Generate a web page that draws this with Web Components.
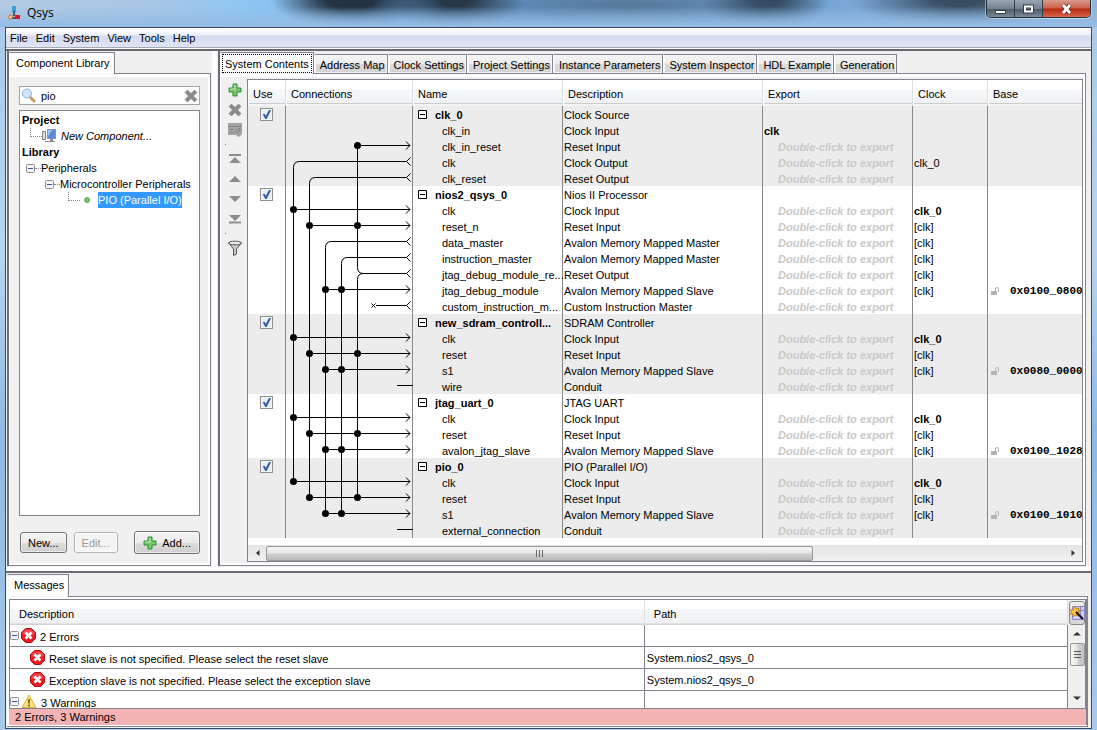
<!DOCTYPE html>
<html lang="en">
<head>
<meta charset="utf-8">
<title>Qsys</title>
<style>
html, body { margin: 0; }
body { font: 11px/16px "Liberation Sans", Arial, sans-serif; color: #000; background: #a9c9ea; }
</style>
</head>
<body>
<qsys-window></qsys-window>
<script>
class Base extends HTMLElement {
  connectedCallback() {
    if (this.shadowRoot) return;
    const t = document.createElement('template');
    t.innerHTML = `<style>*{box-sizing:border-box}button{font:inherit;color:inherit;margin:0}</style>` + this.view();
    this.attachShadow({ mode: 'open' }).append(t.content.cloneNode(true));
  }
}
const define = (n, c) => customElements.define(n, c);

const plus = `<svg width="14" height="14" viewBox="0 0 14 14"><path d="M5 1h4v4h4v4H9v4H5V9H1V5h4z" fill="#7cc66e" stroke="#2f8a35"/><path d="M6 2.5h1V6H2.5" fill="none" stroke="#c3eab8"/></svg>`;
const cross = `<svg width="14" height="14" viewBox="0 0 14 14"><path d="M3.5 1 7 4.5 10.500 1 13 3.500 9.500 7 13 10.500 10.500 13 7 9.500 3.500 13 1 10.500 4.500 7 1 3.500z" fill="#8b8b8b" stroke="#777" stroke-width=".6"/></svg>`;
const errorIcon = `<svg width="15" height="15" viewBox="0 0 15 15"><path d="M4.500.5h6l4 4v6l-4 4h-6l-4-4v-6z" fill="#e81c22" stroke="#b80e14"/><path d="M4.500 1.500h6l3 3v2c-3 1-9 1-12 0v-2z" fill="#fa6468" opacity=".6"/><path d="m4.500 4.500 6 6m0-6-6 6" stroke="#fff" stroke-width="2.600"/></svg>`;
const warnIcon = `<svg width="16" height="15" viewBox="0 0 16 15"><path d="M8 1 15 13.500H1z" fill="#fbe17c" stroke="#d9b23c" stroke-linejoin="round"/><path d="M8 5v4.500M8 10.500v2" stroke="#7a6410" stroke-width="1.800"/></svg>`;
const minus = `<svg width="9" height="9" viewBox="0 0 9 9"><rect x=".5" y=".5" width="8" height="8" rx="1" fill="#f4f4f4" stroke="#8e8f8f"/><path d="M2 4.500h5" stroke="#3b56a0"/></svg>`;

define('title-bar', class extends Base {
  view() { return `<style>
    :host{display:flex;height:27px;align-items:stretch;margin:0 -5px;padding:0 5px 0 8px;overflow:hidden;
      background:
       linear-gradient(180deg,transparent 25%,#94bce4 95%),
       radial-gradient(ellipse 80px 30px at 350px 0,#16202cdd 30%,transparent),
       radial-gradient(ellipse 70px 30px at 455px 0,#1d2833dd 20%,transparent),
       radial-gradient(ellipse 190px 24px at 630px 6px,#4f6a84bb,transparent),
       radial-gradient(ellipse 65px 30px at 765px 0,#25374add 20%,transparent),
       radial-gradient(ellipse 110px 30px at 960px 0,#2c3e50dd 20%,transparent),
       linear-gradient(90deg,#b4cbe2,#a5c6e6 15%,#8fc6f3 22%,#86bff0 28%,#5f93c6 40%,#6f9fd0 70%,#83b0dd 85%,#8fb6da)}
    h1{font:12px/26px "Open Sans","Noto Sans",sans-serif;margin:0 auto 0 6px}
    .logo{margin-top:6px}
    .box{display:flex;height:18px;border:1px solid #26303c;border-top:0;border-radius:0 0 5px 5px;overflow:hidden;box-shadow:0 0 0 1px #ffffff66;margin-right:1px}
    button{display:grid;place-items:center;padding:0;border:0;border-right:1px solid #333e4c;width:28px;background:linear-gradient(#9aa6b3,#76828f 50%,#4c5967 52%,#7d8b99)}
    .close{width:47px;border:0;background:linear-gradient(#d99a8d,#cc5e47 48%,#b62a10 52%,#d8674a)}
  </style>
  <svg class="logo" width="13" height="14" viewBox="0 0 13 14"><path d="M4 0h4v6H4z" fill="#3aa0dc"/><path d="M6 5v5M3 12h6" stroke="#20364c" stroke-width="1.400"/><circle cx="2.500" cy="11" r="2" fill="#f6d0a0" stroke="#e26418"/><path d="M7 9h5v4H7z" fill="#e0122c"/></svg>
  <h1>Qsys</h1>
  <div class="box">
   <button aria-label="Minimize"><svg width="13" height="12"><path d="M1.500 7.500h10v3h-10z" fill="#fff" stroke="#333d49"/></svg></button>
   <button aria-label="Maximize"><svg width="13" height="12"><path d="M3 3.500h7v5H3z" fill="none" stroke="#333d49" stroke-width="4"/><path d="M3 3.500h7v5H3z" fill="none" stroke="#fff" stroke-width="2"/></svg></button>
   <button class="close" aria-label="Close"><svg width="13" height="12"><path d="m3 2 7 8m0-8-7 8" stroke="#5c2a28" stroke-width="4.500"/><path d="m3 2 7 8m0-8-7 8" stroke="#fff" stroke-width="2.800"/></svg></button>
  </div>`; }
});

define('menu-bar', class extends Base {
  view() { return `<style>
    :host{display:block;border-bottom:2px solid #68686e;background:#fff;padding-bottom:1px}
    nav{display:flex;gap:8px;padding:0 4px;height:20px;border-bottom:1px solid #a9a9b4;background:linear-gradient(#fff,#eef1f8 35%,#d5dbee 42%,#e0e5f5)}
    button{border:0;background:none;padding:1px 0 0;line-height:16px}
  </style><nav>${['File','Edit','System','View','Tools','Help'].map(t => `<button>${t}</button>`).join('')}</nav>`; }
});

define('tab-panel', class extends Base {
  view() {
    const tabs = this.getAttribute('tabs').split('|');
    return `<style>
    :host{display:flex;flex-direction:column;min-width:0;background:#f0f0f0;padding-top:1px}
    .tabs{display:flex;position:relative}
    button{white-space:nowrap;border:1px solid #83838f;border-left-color:#fff;border-bottom:0;height:19px;margin-top:2px;padding:1px 2px 0 5px;background:linear-gradient(#f4f4f4,#ececec 50%,#dcdcdc 52%,#d2d2d2);box-shadow:inset 0 0 0 1px #f6f6f6}
    button:first-child{height:22px;margin:0 0 -1px;background:#fff;border-left-color:#fff;padding:0 4px 2px 6px;position:relative}
    :host([focused]) button:first-child{padding:0 1px}
    :host([focused]) button:first-child span{display:block;border:1px dotted #000;padding:0 2px;height:19px;line-height:18px}
    .body{flex:1;display:flex;flex-direction:column;border:1px solid #83838f;border-left:0;background:#fff;padding:3px 2px 2px 1px;min-width:0}
    .in{flex:1;display:flex;flex-direction:column;background:#f0f0f0;min-width:0}
    :host([flush]) .in{background:#fff}
    :host([flush]) button:first-child{height:23px}
    :host([flush]) .body{padding:2px 0 1px 2px}
    </style><div class="tabs" role="tablist">${tabs.map((t,i) => `<button role="tab" aria-selected="${!i}"><span>${t}</span></button>`).join('')}</div>
    <div class="body"><div class="in"><slot></slot></div></div>`; }
});

define('component-library', class extends Base {
  view() { return `<style>
    :host{flex:1;display:flex;flex-direction:column;padding:9px 8px 9px 9px}
    .search{display:flex;align-items:center;border:1px solid #a4a4a4;background:#fff;height:19px;padding:0 1px;margin-bottom:5px}
    input{flex:1;min-width:0;border:0;outline:0;font:inherit;padding:1px 0 0 5px;background:none}
    .search button{display:flex;border:0;background:none;padding:0}
    .tree{flex:1;border:1px solid #83838f;background:#fff;padding:1px 2px}
    .tree div{display:flex;align-items:center;height:16px;white-space:nowrap}
    b{font-size:11px}
    .a{padding-left:8px}.c{padding-left:4px}.d{padding-left:23px}.e{padding-left:46px}
    .dots{width:6px;border-top:1px dotted #888}
    .elbow{width:12px;height:9px;border:dotted #888;border-width:0 0 1px 1px;align-self:start}
    .sel{background:#39f;color:#fff;padding:0;margin-left:8px}
    .dot{width:6px;height:6px;border-radius:3px;background:#7ccb6e;border:1px solid #59a650;margin-left:4px}
    i{margin-left:5px}
    .row{display:flex;align-items:center;margin-top:15px;gap:7px;padding-left:1px}
    .row button{height:21px;padding:0 7px;border:1px solid #707070;border-radius:3px;background:linear-gradient(#f4f4f4,#ebebeb 50%,#dcdcdc 52%,#cfcfcf);box-shadow:inset 0 0 0 1px #fff9;white-space:nowrap}
    .row button:disabled{color:#999;border-color:#b5b5b5;background:#f4f4f4}
    .row .add{height:23px;margin-left:auto;display:flex;align-items:center;gap:5px;padding:0 8px}
  </style>
  <div class="search"><svg width="15" height="15" viewBox="0 0 15 15"><path d="m9 9 4 4" stroke="#c99a68" stroke-width="3" stroke-linecap="round"/><circle cx="6" cy="5.500" r="4.500" fill="#cfe6fb" stroke="#8fb3da"/></svg>
   <input type="text" aria-label="Search components" value="pio"><button aria-label="Clear search">${cross}</button></div>
  <div class="tree">
   <div><b>Project</b></div>
   <div class="a"><span class="elbow"></span><svg width="14" height="14" viewBox="0 0 14 14"><rect x=".5" y="2.500" width="3" height="8" fill="#ddd" stroke="#888"/><rect x="5.500" y=".5" width="8" height="9" fill="#5c8bdc" stroke="#8095c0"/><path d="M6 1h4l-4 6z" fill="#a9c5f3"/><path d="M8 10h3v2h2v1H3v-1h5z" fill="#888"/></svg><i>New Component...</i></div>
   <div><b>Library</b></div>
   <div class="c">${minus}<span class="dots"></span><span>Peripherals</span></div>
   <div class="d">${minus}<span class="dots"></span><span>Microcontroller Peripherals</span></div>
   <div class="e"><span class="elbow"></span><span class="dot"></span><span class="sel">PIO (Parallel I/O)</span></div>
  </div>
  <div class="row"><button>New...</button><button disabled>Edit...</button><button class="add">${plus}Add...</button></div>`; }
});

/* module: [name, description, [[port, description, export, clock, base], ...]] */
const X = '*';
const modules = [
  ['clk_0','Clock Source',[['clk_in','Clock Input','clk'],['clk_in_reset','Reset Input',X],['clk','Clock Output',X,'clk_0'],['clk_reset','Reset Output',X]]],
  ['nios2_qsys_0','Nios II Processor',[['clk','Clock Input',X,'!clk_0'],['reset_n','Reset Input',X,'[clk]'],['data_master','Avalon Memory Mapped Master',X,'[clk]'],['instruction_master','Avalon Memory Mapped Master',X,'[clk]'],['jtag_debug_module_re...','Reset Output',X,'[clk]'],['jtag_debug_module','Avalon Memory Mapped Slave',X,'[clk]','0x0100_0800'],['custom_instruction_m...','Custom Instruction Master',X]]],
  ['new_sdram_controll...','SDRAM Controller',[['clk','Clock Input',X,'!clk_0'],['reset','Reset Input',X,'[clk]'],['s1','Avalon Memory Mapped Slave',X,'[clk]','0x0080_0000'],['wire','Conduit',X]]],
  ['jtag_uart_0','JTAG UART',[['clk','Clock Input',X,'!clk_0'],['reset','Reset Input',X,'[clk]'],['avalon_jtag_slave','Avalon Memory Mapped Slave',X,'[clk]','0x0100_1028']]],
  ['pio_0','PIO (Parallel I/O)',[['clk','Clock Input',X,'!clk_0'],['reset','Reset Input',X,'[clk]'],['s1','Avalon Memory Mapped Slave',X,'[clk]','0x0100_1010'],['external_connection','Conduit',X]]]
];

define('connection-graph', class extends Base {
  view() {
    const y = r => r * 16 + 7.5, x = c => c * 16 + 7.5;
    let p = '', dots = '';
    const dot = (c, r) => dots += `<circle cx="${x(c)}" cy="${y(r)}" r="3.500"/>`;
    const sink = (r, cols) => { p += `M${x(cols[0])} ${y(r)}H124m-4-4 4 4-4 4`; cols.forEach(c => dot(c, r)); };
    const source = (r, c, end) => p += `M${x(c)} ${y(end)}V${y(r) + 6}q0-6 6-6H120.500m4-4-4 4 4 4`;
    sink(2, [4]);
    source(3, 0, 23); source(4, 1, 24); source(8, 2, 25); source(9, 3, 25); source(10, 4, 24);
    p += `M${x(4)} ${y(2)}V${y(10) - 6}q0 6 6 6`;
    [6, 14, 19, 23].forEach(r => sink(r, [0]));
    [7, 15, 20, 24].forEach(r => sink(r, [1, 4]));
    [11, 16, 21, 25].forEach(r => sink(r, [2, 3]));
    p += `M90 ${y(12)}H120.500m4-4-4 4 4 4M85.500 ${y(12) - 2}l4 4m0-4-4 4`;
    [17, 26].forEach(r => p += `M111 ${y(r)}h16`);
    return `<style>:host{display:block}svg{display:block}</style><svg width="127" height="432" viewBox="0 0 127 432"><path d="${p}" fill="none" stroke="#000"/>${dots}</svg>`; }
});

define('system-contents', class extends Base {
  view() {
    const lock = `<svg width="9" height="9" viewBox="0 0 9 9"><path d="M0 4h6v4H0z" fill="#b4b4b4"/><path d="M4.500 4V2q0-1.500 1.500-1.500T7.500 2v3" fill="none" stroke="#b4b4b4"/></svg>`;
    const btn = (n, s) => `<button aria-label="${n}">${s}</button>`;
    const tri = (d) => `<svg width="14" height="14" viewBox="0 0 14 14"><path d="${d}" fill="#8d8d8d"/></svg>`;
    const cell = m => m[2].map(p => `<tr><td></td><td></td><td class="port">${p[0]}</td><td>${p[1]}</td>
      <td>${p[2] === X ? '<em>Double-click to export</em>' : `<b>${p[2]}</b>`}</td>
      <td>${!p[3] ? '' : p[3][0] === '!' ? `<b>${p[3].slice(1)}</b>` : p[3]}</td>
      <td>${p[4] ? `<div class="base">${lock}<code>${p[4]}</code></div>` : ''}</td></tr>`).join('');
    return `<style>
    :host{flex:1;display:flex;padding:2px 0 1px 1px;min-width:0}
    .tools{width:25px;display:flex;flex-direction:column;align-items:center;padding-top:1px;flex:none}
    .tools button{display:grid;place-items:center;width:20px;height:20px;border:0;background:none;padding:0}
    .tools hr{width:1px;height:1px;border:0;background:#777;margin:4px 18px 4px 0}
    .pane{flex:1;min-width:0;display:flex;flex-direction:column;border:1px solid #83838f;background:#fff}
    .wrap{position:relative;overflow:hidden}
    table{width:100%;table-layout:fixed;border-collapse:separate;border-spacing:0}
    th{height:26px;padding:2px 0 0 4px;font-weight:400;text-align:left;background:linear-gradient(#fff 0 9px,#f7f8fa 9px,#f0f1f3 23px,#ccc 23px 24px,#f4f4f4 24px);border-right:1px solid #dedfe1;border-left:1px solid #fff;vertical-align:middle}
    th:last-child{border-right:0}
    td{height:16px;padding:2px 0 0 1px;line-height:14px;white-space:nowrap;overflow:hidden;border-right:1px solid #888;vertical-align:top}
    td:last-child{border-right:0}
    tbody:nth-of-type(odd){background:#ececec}
    td.port{padding-left:29px;overflow:visible}
    .mod{display:flex;align-items:center;height:14px;gap:8px;padding-left:4px;font-weight:700}
    .mod svg{flex:none;margin-bottom:2px}
    .mod span{overflow:hidden}
    em{font-weight:700;color:#c8c8c8;padding-left:14px}
    .base{display:flex;align-items:center;height:14px;gap:10px;padding-left:2px}
    .base svg{flex:none}
    code{font:bold 11px/14px "Liberation Mono",monospace}
    td.use{padding:2px 0 0 12px}
    input{appearance:none;width:13px;height:13px;margin:0;border:1px solid #8e8f8f;background:#e8edf4;box-shadow:inset 0 0 0 1px #f6f6f6;display:grid;place-items:center}
    input:checked::after{content:"";width:9px;height:9px;background:#3a56a5;clip-path:polygon(8% 45%,30% 45%,42% 68%,78% 0,100% 0,52% 100%,36% 100%)}
    connection-graph{position:absolute;left:38px;top:26px}
    .bar{margin-top:auto;display:flex;align-items:center;height:16px;background:linear-gradient(#e4e4e4,#f2f2f2)}
    .bar button{width:18px;height:16px;border:0;padding:0;background:none;display:grid;place-items:center}
    .track{flex:1;height:15px}
    .thumb{width:68.5%;height:15px;border:1px solid #979797;border-radius:2px;background:linear-gradient(#f5f5f5,#e6e6e6 48%,#cfcfcf 52%,#bcbcbc);display:grid;place-items:center}
    </style>
    <div class="tools" role="toolbar">
     ${btn('Add', plus)}${btn('Remove', cross)}
     ${btn('Edit', `<svg width="16" height="14" viewBox="0 0 16 14"><path d="M1 0h14v11l-3 3-3-2H1z" fill="#a2a2a2"/><path d="M1 3.500h13M3 6.500h4M3 9.500h3M8 9l4-4 1 2-3 4" stroke="#848484" fill="none"/></svg>`)}<hr>
     ${btn('Top', tri('M1 2h12v2H1zM7 5l6 6H1z'))}${btn('Up', tri('M7 4l6 6H1z'))}${btn('Down', tri('M1 4h12l-6 6z'))}${btn('Bottom', tri('M1 3h12L7 9zM1 9.500h12v2H1z'))}<hr>
     ${btn('Filter', `<svg width="16" height="16" viewBox="0 0 16 16"><path d="M1.500 3 6.500 9v6.500l3-1.500V9l5-6z" fill="#c9c9c9" stroke="#555"/><ellipse cx="8" cy="3" rx="6.500" ry="1.800" fill="#eee" stroke="#555"/></svg>`)}
    </div>
    <div class="pane"><div class="wrap"><table>
     <colgroup><col style="width:38px"><col style="width:127px"><col style="width:150px"><col style="width:200px"><col style="width:150px"><col style="width:75px"><col></colgroup>
     <thead><tr>${['Use','Connections','Name','Description','Export','Clock','Base'].map(h => `<th scope="col">${h}</th>`).join('')}</tr></thead>
     ${modules.map(m => `<tbody><tr><td class="use"><input type="checkbox" checked aria-label="Use ${m[0]}"></td><td></td>
       <td><div class="mod"><svg width="9" height="9"><path d="M.5.5h8v8h-8zM2 4.500h5" fill="#fff" stroke="#000"/></svg><span>${m[0]}</span></div></td><td>${m[1]}</td><td></td><td></td><td></td></tr>${cell(m)}</tbody>`).join('')}
     </table><connection-graph></connection-graph></div>
     <div class="bar"><button aria-label="Scroll left"><svg width="5" height="8"><path d="M4.500 1v6L1 4z" fill="#333"/></svg></button>
      <div class="track"><div class="thumb"><svg width="9" height="7"><path d="M1.500 0v7M4.500 0v7M7.500 0v7" stroke="#666"/></svg></div></div>
      <button aria-label="Scroll right"><svg width="5" height="8"><path d="M.5 1v6L4 4z" fill="#333"/></svg></button></div>
    </div>`; }
});

define('message-list', class extends Base {
  view() { return `<style>
    :host{display:block}
    .pane{display:flex;border:1px solid #83838f;border-width:1px 0 1px 1px;height:110px;overflow:hidden}
    table{flex:1;table-layout:fixed;border-collapse:separate;border-spacing:0;align-self:flex-start;width:0;background:#fff}
    th{height:25px;padding:3px 0 0 9px;font-weight:400;text-align:left;background:linear-gradient(#fff 0 9px,#f6f7f9 9px,#f0f1f3 23px,#d2d2d2 24px);border-right:1px solid #dedfe1}
    td{height:22px;padding:0 0 0 2px;border:solid #83838f;border-width:0 1px 1px 0}
    td:first-child{padding-left:0}
    tr>:first-child{width:60%}
    .m{display:flex;align-items:center;height:21px;white-space:nowrap;gap:2px}
    .m span{padding:3px 0 0 2px}
    .kid{padding-left:20px}
    .side{width:19px;display:flex;flex-direction:column;align-items:center;background:#f0f0f0;padding:1px 1px 2px 2px;border-right:2px solid #83838f}
    .side button{width:16px;height:16px;display:grid;place-items:center;padding:0;border:0;background:none;flex:none}
    .side .wand{height:24px;border:1px solid #888;border-radius:3px;background:linear-gradient(#eee,#d4d4d4)}
    .track{flex:1;margin-top:2px}
    .thumb{width:15px;height:23px;border:1px solid #979797;border-radius:2px;background:linear-gradient(90deg,#f5f5f5,#e6e6e6 48%,#cfcfcf 52%,#c2c2c2);display:grid;place-items:center}
    .status{background:#f4b3b3;height:16px;line-height:17px;padding-left:6px;border-right:1px solid #83838f}
    </style>
    <div class="pane"><table><thead><tr><th scope="col">Description</th><th scope="col">Path</th></tr></thead><tbody>
     <tr><td><div class="m">${minus}${errorIcon}<span>2 Errors</span></div></td><td></td></tr>
     <tr><td><div class="m kid">${errorIcon}<span>Reset slave is not specified. Please select the reset slave</span></div></td><td>System.nios2_qsys_0</td></tr>
     <tr><td><div class="m kid">${errorIcon}<span>Exception slave is not specified. Please select the exception slave</span></div></td><td>System.nios2_qsys_0</td></tr>
     <tr><td><div class="m">${minus}${warnIcon}<span>3 Warnings</span></div></td><td></td></tr>
    </tbody></table>
    <div class="side"><button class="wand" aria-label="Choose columns"><svg width="15" height="16" viewBox="0 0 15 16"><path d="M2.500 1.500h12v13h-12zM2.500 5.500h12M10.500 1.500v13" fill="#cfcdf0" stroke="#8c88c8"/><path d="m5 1 1 3 3-1-1 3 2 1-3 1 1 3-3-1-2 2v-3H0l2-2-2-2h3z" fill="#ffc83c" stroke="#c07a10" stroke-width=".8"/><path d="m6 7 7 7" stroke="#111" stroke-width="2"/></svg></button>
     <button aria-label="Scroll up"><svg width="8" height="5"><path d="M0 4.500h8L4 1z" fill="#333"/></svg></button>
     <div class="track"><div class="thumb"><svg width="7" height="9"><path d="M0 1.500h7M0 4.500h7M0 7.500h7" stroke="#555"/></svg></div></div>
     <button aria-label="Scroll down"><svg width="8" height="5"><path d="M0 .5h8L4 4z" fill="#333"/></svg></button></div></div>
    <div class="status" role="status">2 Errors, 3 Warnings</div>`; }
});

define('qsys-window', class extends Base {
  view() { return `<style>
    :host{display:flex;flex-direction:column;box-sizing:border-box;min-height:100vh;padding:0 5px 1px;background:linear-gradient(#a9c9ea,#b7d3ef 35%,#8fb9e2 60%,#a9c9ea)}
    .frame{flex:1;display:flex;flex-direction:column;border:1px solid #3c4a5e;background:#f0f0f0;padding-bottom:1px}
    main{flex:1;display:grid;grid-template-columns:204px 5px 1fr;column-gap:1px;padding:0 5px 0 1px;border-bottom:1px solid #f0f0f0}
    .split{background:#fff}
    main tab-panel{border-left:2px solid #6c6c74}
    .messages{border-top:4px solid #fff}
    .messages tab-panel{border-top:2px solid #6c6c74;padding:1px 3px 0 1px}
    </style>
    <title-bar></title-bar>
    <div class="frame"><menu-bar></menu-bar>
     <main>
      <tab-panel tabs="Component Library"><component-library></component-library></tab-panel>
      <div class="split"></div>
      <tab-panel focused tabs="System Contents|Address Map|Clock Settings|Project Settings|Instance Parameters|System Inspector|HDL Example|Generation"><system-contents></system-contents></tab-panel>
     </main>
     <div class="messages"><tab-panel flush tabs="Messages"><message-list></message-list></tab-panel></div>
    </div>`; }
});
</script>
</body>
</html>
